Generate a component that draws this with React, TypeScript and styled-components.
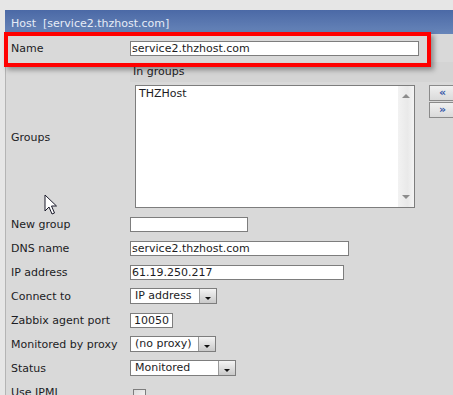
import styled, { createGlobalStyle } from 'styled-components';

const GlobalStyle = createGlobalStyle`
  html, body {
    margin: 0;
    padding: 0;
    background: #e6e6e6;
    overflow: hidden;
  }
  body {
    font-family: 'DejaVu Sans', Verdana, sans-serif;
    font-size: 11px;
    color: #1c1c24;
  }
`;

export default function App() {
    return (
        <Page>
            <GlobalStyle />
            <Panel>
                <Header>Host&nbsp;&nbsp;[service2.thzhost.com]</Header>

                <Row $h={28}>
                    <Label>Name</Label>
                    <TextInput $w={289} defaultValue="service2.thzhost.com" />
                </Row>

                <GroupsBlock>
                    <GroupsLabel>Groups</GroupsLabel>
                    <Caption>In groups</Caption>
                    <GroupsArea>
                        <ListBox>
                            <ListItems>
                                <div>THZHost</div>
                            </ListItems>
                            <ScrollTrack>
                                <ScrollArrow $dir="up" />
                                <ScrollArrow $dir="down" />
                            </ScrollTrack>
                        </ListBox>
                        <MoveButtons>
                            <MoveButton>«</MoveButton>
                            <MoveButton>»</MoveButton>
                        </MoveButtons>
                    </GroupsArea>
                </GroupsBlock>

                <Row>
                    <Label>New group</Label>
                    <TextInput $w={118} defaultValue="" />
                </Row>
                <Row>
                    <Label>DNS name</Label>
                    <TextInput $w={219} defaultValue="service2.thzhost.com" />
                </Row>
                <Row>
                    <Label>IP address</Label>
                    <TextInput $w={214} defaultValue="61.19.250.217" />
                </Row>
                <Row>
                    <Label>Connect to</Label>
                    <Select $w={87}>
                        <SelectText>IP address</SelectText>
                        <SelectButton />
                    </Select>
                </Row>
                <Row>
                    <Label>Zabbix agent port</Label>
                    <PortInput defaultValue="10050" />
                </Row>
                <Row>
                    <Label>Monitored by proxy</Label>
                    <Select $w={86}>
                        <SelectText>(no proxy)</SelectText>
                        <SelectButton />
                    </Select>
                </Row>
                <Row>
                    <Label>Status</Label>
                    <Select $w={106}>
                        <SelectText>Monitored</SelectText>
                        <SelectButton />
                    </Select>
                </Row>
                <Row>
                    <Label>Use IPMI</Label>
                    <CheckBox />
                </Row>
            </Panel>

            <Highlight />

            <Cursor width="14" height="22" viewBox="0 0 14 22">
                <path
                    d="M1 1 L1 17 L5 13 L8 20 L10.5 19 L7.5 12 L12.5 12 Z"
                    fill="#fff"
                    stroke="#1a1a2a"
                    strokeWidth="1"
                    strokeLinejoin="round"
                />
            </Cursor>
        </Page>
    );
}

const Page = styled.div`
  position: relative;
  width: 453px;
  height: 395px;
  padding-top: 10px;
  box-sizing: border-box;
`;

const Panel = styled.div`
  margin-left: 5px;
  border-left: 1px solid #b4b4b4;
  background: #d9d9d9;
  height: 385px;
`;

const Header = styled.div`
  height: 24px;
  margin-left: -1px;
  padding-left: 6px;
  padding-top: 2px;
  box-sizing: border-box;
  display: flex;
  align-items: center;
  background: linear-gradient(#4b69a6, #6785b9);
  color: #e6ecf6;
  font-size: 11px;
`;

const Row = styled.div<{ $h?: number }>`
  display: grid;
  grid-template-columns: 119px 1fr;
  align-items: center;
  height: ${({ $h }) => $h ?? 24}px;
  padding-left: 5px;
`;

const Label = styled.div`
  white-space: nowrap;
`;

const TextInput = styled.input<{ $w: number }>`
  width: ${({ $w }) => $w}px;
  height: 15px;
  box-sizing: border-box;
  border: 1px solid #7d7d7d;
  background: #fff;
  padding: 0 1px;
  margin: 0;
  font-family: inherit;
  font-size: 11px;
  color: #1c1c24;
  outline: none;
`;

const PortInput = styled(TextInput).attrs({ $w: 43 })`
  text-align: right;
  padding-right: 3px;
`;

const GroupsBlock = styled.div`
  display: grid;
  grid-template-columns: 119px 1fr;
  grid-template-rows: 20px 130px;
  padding-left: 5px;
`;

const GroupsLabel = styled.div`
  grid-row: 1 / span 2;
  align-self: center;
`;

const Caption = styled.div`
  align-self: center;
  padding-left: 3px;
  background: #d4d4d4;
  height: 20px;
  line-height: 20px;
  margin-right: -40px;
`;

const GroupsArea = styled.div`
  display: flex;
  align-items: flex-start;
  gap: 14px;
  padding-top: 3px;
  padding-left: 5px;
`;

const ListBox = styled.div`
  width: 280px;
  height: 123px;
  box-sizing: border-box;
  border: 1px solid #7d7d7d;
  background: #fff;
  display: flex;
`;

const ListItems = styled.div`
  flex: 1;
  padding: 1px 3px;
`;

const ScrollTrack = styled.div`
  width: 16px;
  background: linear-gradient(90deg, #f2f2f2, #e9e9e9 60%, #f4f4f4);
  display: flex;
  flex-direction: column;
  justify-content: space-between;
  align-items: center;
  padding: 8px 0;
`;

const ScrollArrow = styled.div<{ $dir: 'up' | 'down' }>`
  width: 0;
  height: 0;
  border-left: 4px solid transparent;
  border-right: 4px solid transparent;
  ${({ $dir }) =>
        $dir === 'up'
            ? 'border-bottom: 4px solid #8c8c8c;'
            : 'border-top: 4px solid #8c8c8c;'}
`;

const MoveButtons = styled.div`
  display: flex;
  flex-direction: column;
  gap: 1px;
`;

const MoveButton = styled.div`
  width: 30px;
  height: 16px;
  box-sizing: border-box;
  border: 1px solid #8a8a8a;
  background: linear-gradient(#f0f0f0, #dadada);
  color: #3557a8;
  font-weight: bold;
  font-size: 11px;
  line-height: 13px;
  padding-left: 9px;
`;

const Select = styled.div<{ $w: number }>`
  width: ${({ $w }) => $w}px;
  height: 16px;
  box-sizing: border-box;
  border: 1px solid #7d7d7d;
  background: #fff;
  display: flex;
  align-items: stretch;
`;

const SelectText = styled.div`
  flex: 1;
  padding-left: 4px;
  line-height: 14px;
  white-space: nowrap;
  overflow: hidden;
`;

const SelectButton = styled.div`
  width: 17px;
  border-left: 1px solid #9a9a9a;
  background: linear-gradient(#f4f4f4, #c9c9c9);
  display: flex;
  align-items: flex-end;
  justify-content: center;
  padding-bottom: 3px;
  box-sizing: border-box;

  &::after {
    content: '';
    border-left: 3px solid transparent;
    border-right: 3px solid transparent;
    border-top: 3px solid #111;
  }
`;

const CheckBox = styled.div`
  width: 13px;
  height: 13px;
  margin-left: 3px;
  margin-top: 6px;
  box-sizing: border-box;
  border: 1px solid #7d7d7d;
  background: linear-gradient(135deg, #dcdcdc, #f8f8f8);
`;

const Highlight = styled.div`
  position: absolute;
  left: 4px;
  top: 32px;
  width: 427px;
  height: 35px;
  box-sizing: border-box;
  border: 4px solid #ff0000;
  box-shadow: 3px 3px 5px rgba(0, 0, 0, 0.35);
  pointer-events: none;
`;

const Cursor = styled.svg`
  position: absolute;
  left: 44px;
  top: 194px;
`;
